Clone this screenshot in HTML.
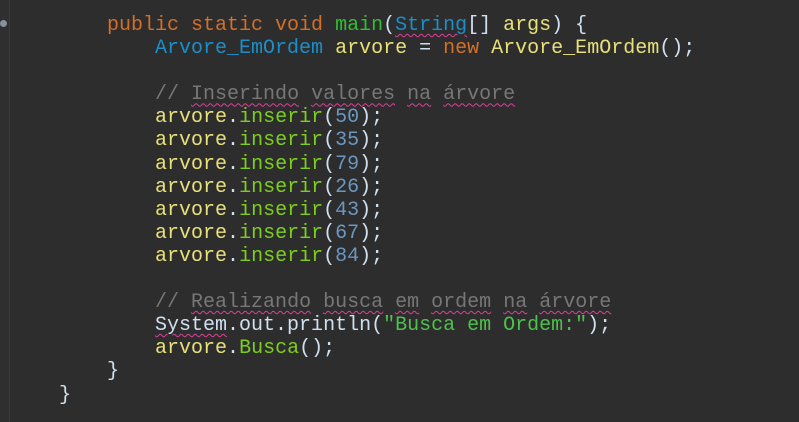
<!DOCTYPE html>
<html><head><style>
body{margin:0;width:799px;height:422px;background:#2d2d2d;overflow:hidden;position:relative}
.g{position:absolute;left:0;top:0;width:9px;height:422px;background:#2f2f2f;border-right:1px solid #3a3a3a}
.dot{position:absolute;left:0;top:20px;width:7px;height:7px;border-radius:50%;background:#8a8f99}
pre{position:absolute;left:11px;top:14px;margin:0;font-family:"Liberation Mono",monospace;font-size:20px;line-height:23.1px;color:#dcdcdc}
.k{color:#d2702a}.m{color:#2fc02f}.c{color:#1c8ec8}.v{color:#e8e07a}.f{color:#7ccf1e}.n{color:#6b97c0}
.cm{color:#777}.s{color:#4ec04e}.p{color:#cfe0f0}
.u{text-decoration:underline wavy #e0409a;text-decoration-thickness:1px;text-underline-offset:3px}
</style></head><body>
<div class="g"></div><div class="dot"></div>
<pre>        <span class="k">public static void</span> <span class="m">main</span><span class="p">(</span><span class="c u">String</span><span class="p">[]</span> <span class="v">args</span><span class="p">) {</span>
            <span class="c">Arvore_EmOrdem</span> <span class="v">arvore</span> <span class="p">=</span> <span class="k">new</span> <span class="v">Arvore_EmOrdem</span><span class="p">();</span>

            <span class="cm">// <span class="u">Inserindo</span> <span class="u">valores</span> <span class="u">na</span> <span class="u">árvore</span></span>
            <span class="v">arvore</span><span class="p">.</span><span class="f">inserir</span><span class="p">(</span><span class="n">50</span><span class="p">);</span>
            <span class="v">arvore</span><span class="p">.</span><span class="f">inserir</span><span class="p">(</span><span class="n">35</span><span class="p">);</span>
            <span class="v">arvore</span><span class="p">.</span><span class="f">inserir</span><span class="p">(</span><span class="n">79</span><span class="p">);</span>
            <span class="v">arvore</span><span class="p">.</span><span class="f">inserir</span><span class="p">(</span><span class="n">26</span><span class="p">);</span>
            <span class="v">arvore</span><span class="p">.</span><span class="f">inserir</span><span class="p">(</span><span class="n">43</span><span class="p">);</span>
            <span class="v">arvore</span><span class="p">.</span><span class="f">inserir</span><span class="p">(</span><span class="n">67</span><span class="p">);</span>
            <span class="v">arvore</span><span class="p">.</span><span class="f">inserir</span><span class="p">(</span><span class="n">84</span><span class="p">);</span>

            <span class="cm">// <span class="u">Realizando</span> <span class="u">busca</span> <span class="u">em</span> <span class="u">ordem</span> <span class="u">na</span> <span class="u">árvore</span></span>
            <span class="p u">System</span><span class="p">.out.println(</span><span class="s">"Busca em Ordem:"</span><span class="p">);</span>
            <span class="v">arvore</span><span class="p">.</span><span class="f">Busca</span><span class="p">();</span>
        <span class="p">}</span>
    <span class="p">}</span></pre>
</body></html>
